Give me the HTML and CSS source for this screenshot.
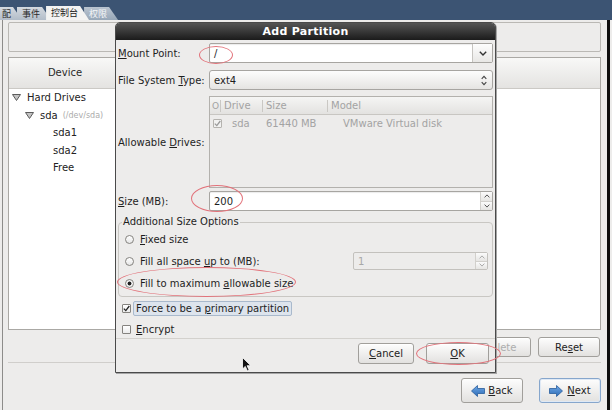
FILE: index.html
```html
<!DOCTYPE html>
<html>
<head>
<meta charset="utf-8">
<link rel="stylesheet" href="styles.css">
</head>
<body>
<div class="topbar">
  <div class="tab t0">配</div>
  <div class="tab t1">事件</div>
  <div class="tab t2 active">控制台</div>
  <div class="tab t3">权限</div>
</div>
<div class="main">
  <div class="topbox"></div>
  <div class="devbox">
    <div class="devhead"><div class="coldev">Device</div><div class="colrest"></div></div>
    <div class="tree">
      <div class="trow l0"><svg class="exp" width="9" height="7" viewBox="0 0 9 7"><path d="M0.5 0.5 H8.5 L4.5 6.5 Z" fill="#c4c4c4" stroke="#5c5c5c" stroke-width="1"/></svg>Hard Drives</div>
      <div class="trow l1"><svg class="exp" width="9" height="7" viewBox="0 0 9 7"><path d="M0.5 0.5 H8.5 L4.5 6.5 Z" fill="#c4c4c4" stroke="#5c5c5c" stroke-width="1"/></svg>sda<span class="devpath">(/dev/sda)</span></div>
      <div class="trow l2">sda1</div>
      <div class="trow l2">sda2</div>
      <div class="trow l2">Free</div>
    </div>
  </div>
  <div class="actions">
    <div class="btn dis"><u>D</u>elete</div>
    <div class="btn">Re<u>s</u>et</div>
  </div>
  <div class="sep"></div>
  <div class="nav">
    <div class="btn big"><svg class="arrow" width="14" height="12" viewBox="0 0 14 12"><defs><linearGradient id="ga" x1="0" y1="0" x2="0" y2="1"><stop offset="0" stop-color="#6fa8e6"/><stop offset="1" stop-color="#2d6cb6"/></linearGradient></defs><path d="M0.5 6 L6.5 0.5 V3.5 H13.5 V8.5 H6.5 V11.5 Z" fill="url(#ga)" stroke="#285d9c" stroke-width="0.8"/></svg><span><u>B</u>ack</span></div>
    <div class="btn big focus-btn"><svg class="arrow" width="14" height="12" viewBox="0 0 14 12"><defs><linearGradient id="gb" x1="0" y1="0" x2="0" y2="1"><stop offset="0" stop-color="#6fa8e6"/><stop offset="1" stop-color="#2d6cb6"/></linearGradient></defs><path d="M13.5 6 L7.5 0.5 V3.5 H0.5 V8.5 H7.5 V11.5 Z" fill="url(#gb)" stroke="#285d9c" stroke-width="0.8"/></svg><span><u>N</u>ext</span></div>
  </div>
</div>

<div class="dialog">
  <div class="titlebar">Add Partition</div>
  <div class="dbody">
    <div class="frow r-mount">
      <div class="flabel"><u>M</u>ount Point:</div>
      <div class="entry"><span class="val">/</span><span class="dropbtn"><svg width="8" height="5" viewBox="0 0 8 5"><path d="M0.8 0.8 L4 4 L7.2 0.8" fill="none" stroke="#333" stroke-width="1.4"/></svg></span></div>
    </div>
    <div class="frow r-fs">
      <div class="flabel">File System <u>T</u>ype:</div>
      <div class="combo"><span class="val">ext4</span><svg class="updown" width="6" height="11" viewBox="0 0 6 11"><path d="M0.7 3.8 L3 1.3 L5.3 3.8 M0.7 7.2 L3 9.7 L5.3 7.2" fill="none" stroke="#444" stroke-width="1.1"/></svg></div>
    </div>
    <div class="frow r-drives">
      <div class="flabel">Allowable <u>D</u>rives:</div>
      <div class="drives">
        <div class="dhead"><span class="h0">O</span><span class="h1">Drive</span><span class="h2">Size</span><span class="h3">Model</span></div>
        <div class="drow">
          <span class="c0"><span class="cbox grey"><svg width="7" height="7" viewBox="0 0 7 7"><path d="M0.8 3.6 L2.8 5.6 L6.3 1" fill="none" stroke="#9a9a9a" stroke-width="1.3"/></svg></span></span>
          <span class="c1">sda</span><span class="c2">61440 MB</span><span class="c3">VMware Virtual disk</span>
        </div>
      </div>
    </div>
    <div class="frow r-size">
      <div class="flabel"><u>S</u>ize (MB):</div>
      <div class="entry"><span class="val">200</span><span class="spinbtns"><span class="sb"><svg width="6" height="4" viewBox="0 0 6 4"><path d="M0.6 3.4 L3 0.9 L5.4 3.4" fill="none" stroke="#555" stroke-width="1"/></svg></span><span class="sb"><svg width="6" height="4" viewBox="0 0 6 4"><path d="M0.6 0.6 L3 3.1 L5.4 0.6" fill="none" stroke="#555" stroke-width="1"/></svg></span></span></div>
    </div>
    <fieldset class="frame">
      <legend>Additional Size Options</legend>
      <div class="opt"><span class="radio"></span><span><u>F</u>ixed size</span></div>
      <div class="opt"><span class="radio"></span><span>Fill all space <u>u</u>p to (MB):</span>
        <div class="spin-dis"><span class="val">1</span><span class="spinbtns"><span class="sb"><svg width="6" height="4" viewBox="0 0 6 4"><path d="M0.6 3.4 L3 0.9 L5.4 3.4" fill="none" stroke="#aaa" stroke-width="1"/></svg></span><span class="sb"><svg width="6" height="4" viewBox="0 0 6 4"><path d="M0.6 0.6 L3 3.1 L5.4 0.6" fill="none" stroke="#aaa" stroke-width="1"/></svg></span></span></div>
      </div>
      <div class="opt"><span class="radio on"></span><span>Fill to maximum <u>a</u>llowable size</span></div>
    </fieldset>
    <div class="chk r-force"><span class="cbox"><svg width="7" height="7" viewBox="0 0 7 7"><path d="M0.8 3.6 L2.8 5.6 L6.3 1" fill="none" stroke="#222" stroke-width="1.3"/></svg></span><span class="focusbox">Force to be a <u>p</u>rimary partition</span></div>
    <div class="chk r-enc"><span class="cbox"></span><span class="enc"><u>E</u>ncrypt</span></div>
    <div class="dsep"></div>
    <div class="dbtns">
      <div class="btn cancel"><u>C</u>ancel</div>
      <div class="btn ok"><u>O</u>K</div>
    </div>
  </div>
</div>

<div class="ring ring-mount"></div>
<div class="ring ring-size"></div>
<div class="ring ring-fill"></div>
<div class="ring ring-ok"></div>

<svg class="cursor" width="10" height="15" viewBox="0 0 10 15"><path d="M0.5 0.5 L0.5 12 L3.3 9.4 L5.4 14 L7.2 13.2 L5.1 8.7 L8.8 8.7 Z" fill="#111" stroke="#fff" stroke-width="0.8"/></svg>
</body>
</html>
```

FILE: styles.css
```css
* { box-sizing: border-box; }
html, body { margin: 0; padding: 0; }
body {
  width: 612px;
  height: 410px;
  overflow: hidden;
  position: relative;
  background: #edeceb;
  font-family: "DejaVu Sans", "Noto Sans CJK SC", sans-serif;
  font-size: 10px;
  color: #1e1e1e;
}
u { text-decoration: underline; text-underline-offset: 1px; }

/* top bar and tabs */
.topbar {
  height: 20px;
  background: #3c5473;
  display: flex;
  align-items: flex-end;
}
.tab {
  position: relative;
  height: 13px;
  padding: 0 11px 0 5px;
  line-height: 13px;
  font-family: "Noto Sans CJK SC", sans-serif;
  font-size: 9px;
  color: #2b2b2b;
  background: linear-gradient(#d4d9df, #b3bdc9);
  clip-path: polygon(0 0, calc(100% - 9px) 0, 100% 100%, 0 100%);
  margin-right: -5px;
}
.t0 { padding-left: 2px; z-index: 4; }
.t1 { z-index: 3; }
.t2 { z-index: 5; }
.t3 { z-index: 1; background: linear-gradient(#b9c4d0, #97a7b8); color: #f4f6f8; }
.tab.active { background: #f3f3f2; color: #1a1a1a; height: 14px; }

/* background window */
.main {
  width: 608px;
  height: 390px;
  margin-left: 2px;
  border-left: 1px solid #8d8c8a;
  border-right: 3px solid #0e0e0e;
  padding: 2px 6px 0 5px;
  display: flex;
  flex-direction: column;
}
.topbox {
  height: 30px;
  border: 1px solid #bab8b4;
  border-radius: 2px;
}
.devbox {
  margin-top: 5px;
  height: 273px;
  border: 1px solid #aaa8a4;
  background: #fff;
  display: flex;
  flex-direction: column;
}
.devhead {
  height: 31px;
  flex-shrink: 0;
  display: flex;
  background: linear-gradient(#f8f8f7, #e4e3e1);
  border-bottom: 1px solid #cbc9c5;
}
.coldev {
  width: 112px;
  text-align: center;
  line-height: 30px;
  color: #2a2a2a;
}
.colrest { flex: 1; }
.trow {
  height: 17.5px;
  display: flex;
  align-items: center;
  color: #222;
}
.trow.l0 { padding-left: 3px; }
.trow.l1 { padding-left: 16px; }
.trow.l2 { padding-left: 44px; }
.exp { margin-right: 6px; flex-shrink: 0; }
.devpath { font-size: 8px; color: #ababab; margin-left: 5px; }

.actions {
  margin-top: 7px;
  display: flex;
  justify-content: flex-end;
  gap: 7px;
  padding-right: 1px;
}
.btn {
  height: 20px;
  width: 62px;
  border: 1px solid #a19f9b;
  border-radius: 3px;
  background: linear-gradient(#fdfdfd, #e2e1df);
  display: flex;
  align-items: center;
  justify-content: center;
  color: #222;
  box-shadow: inset 0 1px 0 #ffffff;
}
.btn.dis { color: #adadad; }
.sep {
  margin-top: 5px;
  border-top: 1px solid #d0cecb;
}
.nav {
  margin-top: 15px;
  display: flex;
  justify-content: flex-end;
  gap: 16px;
}
.btn.big { height: 25px; gap: 3px; }
.btn.focus-btn { border-color: #86a6cc; box-shadow: inset 0 0 0 1px #dfe9f5; gap: 4px; }
.arrow { flex-shrink: 0; }

/* dialog */
.dialog {
  position: absolute;
  left: 115px;
  top: 22px;
  width: 381px;
  border: 1px solid #4a4a4a;
  border-radius: 5px 5px 0 0;
  background: #edeceb;
  box-shadow: 1px 1px 0 #a5a5a5;
}
.titlebar {
  height: 17px;
  border-radius: 4px 4px 0 0;
  background: linear-gradient(#555555, #1b1b1b);
  color: #fff;
  font-weight: bold;
  font-size: 11px;
  line-height: 17px;
  text-align: center;
  letter-spacing: 0.3px;
}
.dbody { padding: 3px 2px 8px; }
.frow { display: flex; align-items: center; }
.flabel { width: 91px; flex-shrink: 0; color: #1e1e1e; }
.r-mount { height: 20px; }
.r-fs { margin-top: 7px; height: 20px; }
.r-drives { margin-top: 6px; height: 92px; }
.r-size { margin-top: 3px; height: 20px; }

.entry {
  flex: 1;
  height: 100%;
  background: #fff;
  border: 1px solid #a7a5a1;
  border-radius: 2px;
  display: flex;
  align-items: center;
  box-shadow: inset 0 1px 1px rgba(0,0,0,0.08);
}
.val { flex: 1; padding-left: 4px; }
.dropbtn {
  width: 20px;
  height: 100%;
  border-left: 1px solid #c6c4c0;
  background: linear-gradient(#fdfdfd, #e8e7e5);
  display: flex;
  align-items: center;
  justify-content: center;
}
.combo {
  flex: 1;
  height: 100%;
  border: 1px solid #a7a5a1;
  border-radius: 3px;
  background: linear-gradient(#fdfdfd, #e5e4e2);
  display: flex;
  align-items: center;
  padding-right: 5px;
}
.spinbtns {
  width: 12px;
  height: 100%;
  display: flex;
  flex-direction: column;
  border-left: 1px solid #d2d0cc;
}
.sb {
  flex: 1;
  display: flex;
  align-items: center;
  justify-content: center;
  background: linear-gradient(#fbfbfb, #e6e5e3);
}
.sb + .sb { border-top: 1px solid #d2d0cc; }

.drives {
  flex: 1;
  height: 100%;
  border: 1px solid #b3b1ad;
  background: #edeceb;
  color: #a3a3a3;
}
.dhead {
  height: 18px;
  display: flex;
  align-items: center;
  background: linear-gradient(#f5f5f4, #e3e2e0);
  border-bottom: 1px solid #c8c6c2;
}
.dhead span { height: 12px; line-height: 12px; padding-left: 3px; }
.dhead .h0 { width: 10px; padding-left: 2px; font-size: 9px; overflow: hidden; }
.h1 { width: 42px; border-left: 1px solid #cac8c4; }
.h2 { width: 65px; border-left: 1px solid #cac8c4; }
.h3 { flex: 1; border-left: 1px solid #cac8c4; }
.drow { height: 17px; display: flex; align-items: center; }
.c0 { width: 22px; padding-left: 3px; display: flex; }
.c1 { width: 34px; }
.c2 { width: 77px; }
.c3 { flex: 1; }

.cbox {
  width: 9px;
  height: 9px;
  border: 1px solid #85837f;
  border-radius: 1px;
  background: linear-gradient(#ffffff, #ebebeb);
  display: flex;
  align-items: center;
  justify-content: center;
  flex-shrink: 0;
}
.cbox.grey { border-color: #b5b3af; background: #f2f2f1; }

.frame {
  margin: 5px 0 0;
  padding: 0 4px 2px;
  border: 1px solid #c9c7c3;
  border-radius: 4px;
  min-width: 0;
}
.frame legend {
  padding: 0 1px;
  margin-left: -1px;
  line-height: 12px;
  font-size: 10px;
}
.opt {
  height: 22px;
  display: flex;
  align-items: center;
  padding-left: 2px;
}
.radio {
  width: 9px;
  height: 9px;
  border: 1px solid #85837f;
  border-radius: 50%;
  background: linear-gradient(#ffffff, #e6e6e6);
  margin-right: 6px;
  flex-shrink: 0;
}
.radio.on { background: radial-gradient(circle, #1e1e1e 0 1.6px, #f4f4f4 2.3px); }
.spin-dis {
  margin-left: auto;
  width: 135px;
  height: 18px;
  border: 1px solid #c3c1bd;
  border-radius: 2px;
  background: #edeceb;
  color: #a8a8a8;
  display: flex;
  align-items: center;
}

.chk { display: flex; align-items: center; padding-left: 4px; }
.r-force { margin-top: 3px; height: 17px; }
.r-enc { margin-top: 4px; height: 16px; }
.focusbox {
  height: 15px;
  line-height: 13px;
  margin-left: 2px;
  padding: 0 2px;
  border: 1px solid #a9b9cc;
  border-radius: 2px;
  background: #dde4ed;
}
.enc { margin-left: 5px; }
.dsep { margin: 1px -2px 0; border-top: 1px solid #d3d1cd; }
.dbtns {
  margin-top: 4px;
  display: flex;
  justify-content: flex-end;
  gap: 12px;
  padding-right: 4px;
}
.btn.cancel { width: 56px; height: 21px; }
.btn.ok { width: 63px; height: 21px; }

/* annotations */
.ring {
  position: absolute;
  border: 1px solid #e2727a;
  border-radius: 50%;
}
.ring-mount { left: 199px; top: 46px; width: 34px; height: 18px; }
.ring-size { left: 191px; top: 185px; width: 52px; height: 27px; }
.ring-fill { left: 117px; top: 267px; width: 179px; height: 30px; }
.ring-ok { left: 416px; top: 342px; width: 85px; height: 23px; }
.cursor { position: absolute; left: 242px; top: 357px; }
```
